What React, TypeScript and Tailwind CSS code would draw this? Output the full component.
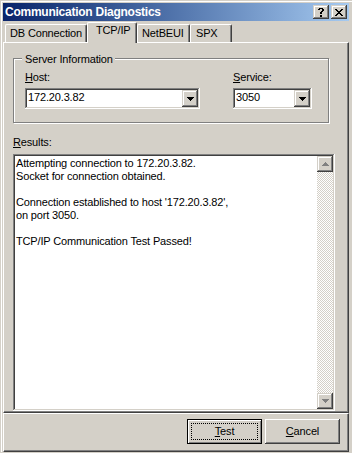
import React from "react";

const FONT = "font-['Liberation_Sans',Arial,sans-serif]";
const RAISED_THIN =
  "shadow-[inset_-1px_-1px_0_#404040,inset_1px_1px_0_#d4d0c8,inset_-2px_-2px_0_#808080,inset_2px_2px_0_#ffffff]";
const BUTTON =
  "shadow-[inset_-1px_-1px_0_#404040,inset_1px_1px_0_#ffffff,inset_-2px_-2px_0_#808080,inset_2px_2px_0_#d4d0c8]";
const SUNKEN =
  "shadow-[inset_-1px_-1px_0_#ffffff,inset_1px_1px_0_#808080,inset_-2px_-2px_0_#d4d0c8,inset_2px_2px_0_#404040]";

function Pix({ rows, color }: { rows: string[]; color: string }) {
  const w = rows[0].length;
  const h = rows.length;
  const rects: React.ReactElement[] = [];
  rows.forEach((r, y) => {
    for (let x = 0; x < w; x++) {
      if (r[x] === "#") {
        rects.push(<rect key={`${x}-${y}`} x={x} y={y} width={1} height={1} fill={color} />);
      }
    }
  });
  return (
    <svg width={w} height={h} viewBox={`0 0 ${w} ${h}`} shapeRendering="crispEdges" className="block">
      {rects}
    </svg>
  );
}

const CLOSE = ["##....##", ".##..##.", "..####..", "...##...", "..####..", ".##..##.", "##....##"];
const HELP = [".####.", "##..##", "....##", "...##.", "..##..", "..##..", "......", "..##..", "..##.."];
const DOWN = ["#######", ".#####.", "..###..", "...#..."];
const UP = ["...#...", "..###..", ".#####.", "#######"];

function Combo({ value, width }: { value: string; width: string }) {
  return (
    <div className={`relative h-[21px] bg-white ${SUNKEN} ${width} pl-[3px] pt-[3px] whitespace-nowrap`}>
      {value}
      <div
        className={`absolute right-[2px] top-[2px] w-[16px] h-[17px] bg-[#d4d0c8] ${RAISED_THIN} flex items-center justify-center`}
      >
        <Pix rows={DOWN} color="#000" />
      </div>
    </div>
  );
}

function Tab({ label, sel, w, pl }: { label: string; sel?: boolean; w: string; pl: string }) {
  return (
    <div
      className={`${sel ? "h-[21px] relative z-10 pt-px" : "mt-[2px] h-[18px] pt-[2px]"} ${w} ${pl} bg-[#d4d0c8] border-l border-t border-white border-r border-r-[#404040] shadow-[inset_-1px_0_0_#808080] whitespace-nowrap rounded-tl-[2px] rounded-tr-[2px]`}
    >
      {label}
    </div>
  );
}

export default function App() {
  return (
    <div
      className={`w-[352px] h-[453px] bg-[#d4d0c8] pl-px pt-px ${FONT} text-[11px] leading-[13px] text-black tracking-[-0.15px] overflow-hidden`}
    >
      <div className="border-l border-t border-white pl-px pt-px">
        <div className="w-[346px] flex flex-col">
          {/* Title bar */}
          <div className="h-[18px] flex items-start bg-linear-to-r from-[#0a246a] to-[#a6caf0] pl-[2px] pr-[2px]">
            <div className="flex-1 text-[12px] leading-[18px] font-bold text-white tracking-[-0.25px] whitespace-nowrap">
              Communication Diagnostics
            </div>
            <div className="flex gap-[2px] mt-[2px]">
              <div className={`w-[16px] h-[14px] bg-[#d4d0c8] ${RAISED_THIN} flex items-center justify-center`}>
                <Pix rows={HELP} color="#000" />
              </div>
              <div className={`w-[16px] h-[14px] bg-[#d4d0c8] ${RAISED_THIN} flex items-center justify-center`}>
                <Pix rows={CLOSE} color="#000" />
              </div>
            </div>
          </div>

          {/* Tabs */}
          <div className="mt-px h-[20px] flex items-start pl-[2px]">
            <Tab label="DB Connection" w="w-[82px]" pl="pl-[4px]" />
            <Tab label="TCP/IP" sel w="w-[50px]" pl="pl-[8px]" />
            <Tab label="NetBEUI" w="w-[53px]" pl="pl-[4px]" />
            <Tab label="SPX" w="w-[42px]" pl="pl-[5px]" />
          </div>

          {/* Tab panel */}
          <div className="h-[371px] border-t border-l border-white border-r border-b border-r-[#404040] border-b-[#404040] shadow-[inset_-1px_-1px_0_#808080] flex flex-col">
            <div className="relative mt-[15px] ml-[9px] w-[316px] h-[65px] border border-[#808080] shadow-[1px_1px_0_#ffffff,inset_1px_1px_0_#ffffff] pt-[12px] pl-[11px] flex">
              <div className="absolute left-[8px] top-[-6px] pl-[3px] pr-[2px] bg-[#d4d0c8] whitespace-nowrap">
                Server Information
              </div>
              <div className="w-[175px] flex flex-col">
                <div>
                  <span className="underline">H</span>ost:
                </div>
                <Combo value="172.20.3.82" width="w-[175px] mt-[4px]" />
              </div>
              <div className="ml-[33px] w-[79px] flex flex-col">
                <div>
                  <span className="underline">S</span>ervice:
                </div>
                <Combo value="3050" width="w-[79px] mt-[4px]" />
              </div>
            </div>

            <div className="mt-[13px] ml-[9px]">
              <span className="underline">R</span>esults:
            </div>

            <div className={`mt-[5px] ml-[9px] w-[322px] h-[257px] bg-white ${SUNKEN} flex`}>
              <div className="flex-1 pl-[3px] pt-[3px] whitespace-nowrap">
                <div>Attempting connection to 172.20.3.82.</div>
                <div>Socket for connection obtained.</div>
                <div className="h-[13px]" />
                <div>Connection established to host '172.20.3.82',</div>
                <div>on port 3050.</div>
                <div className="h-[13px]" />
                <div>TCP/IP Communication Test Passed!</div>
              </div>
              <div className="w-[16px] mt-[2px] mb-[2px] mr-[2px] flex flex-col">
                <div className={`h-[16px] bg-[#d4d0c8] ${RAISED_THIN} flex items-center justify-center`}>
                  <Pix rows={UP} color="#808080" />
                </div>
                <div className="flex-1 bg-[image:repeating-conic-gradient(#d4d0c8_0%_25%,#ffffff_0%_50%)] bg-[length:2px_2px]" />
                <div className={`h-[16px] bg-[#d4d0c8] ${RAISED_THIN} flex items-center justify-center`}>
                  <Pix rows={DOWN} color="#808080" />
                </div>
              </div>
            </div>
          </div>

          {/* Bottom button panel */}
          <div className="h-[39px] border-t border-l border-white border-r border-b border-r-[#404040] border-b-[#404040] shadow-[inset_-1px_-1px_0_#808080] flex justify-end items-start pt-[5px] pr-[8px] gap-[3px]">
            <div className="relative w-[75px] h-[25px] border border-black bg-[#d4d0c8] shadow-[inset_1px_1px_0_#ffffff,inset_-1px_-1px_0_#808080] flex items-center justify-center">
              <div className="absolute inset-[3px] border border-dotted border-black" />
              <span>
                <span className="underline">T</span>est
              </span>
            </div>
            <div className={`w-[75px] h-[25px] bg-[#d4d0c8] ${BUTTON} flex items-center justify-center`}>
              <span>
                <span className="underline">C</span>ancel
              </span>
            </div>
          </div>
        </div>
      </div>
    </div>
  );
}
